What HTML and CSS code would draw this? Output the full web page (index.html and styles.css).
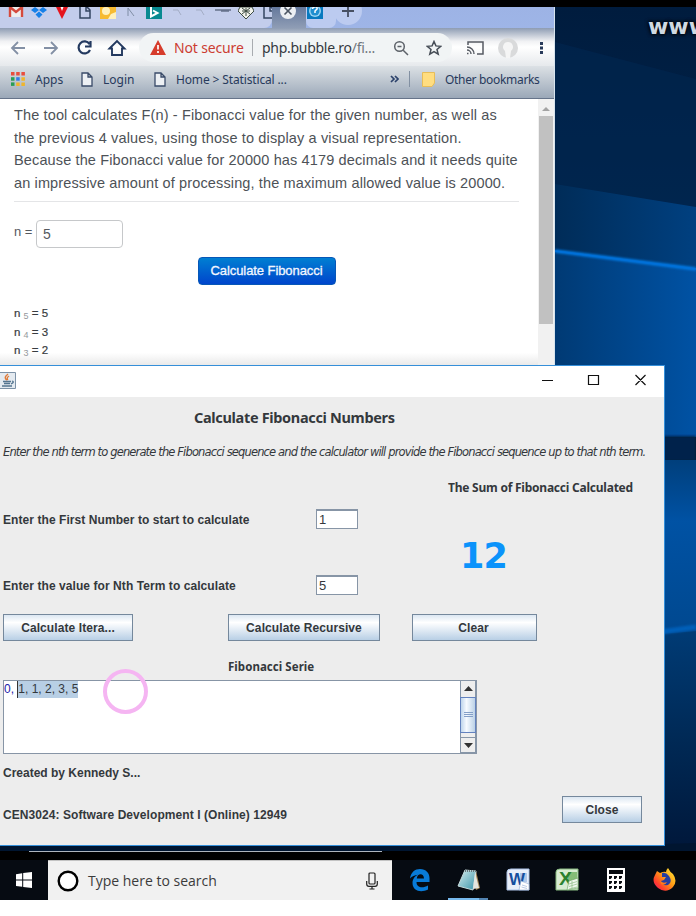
FILE: index.html
```html
<!DOCTYPE html>
<html lang="en">
<head>
<meta charset="utf-8">
<title>Desktop</title>
<link rel="stylesheet" href="styles.css">
</head>
<body>
<main class="screen">
  <svg class="wallpaper" viewBox="0 0 696 851" width="696" height="851">
    <defs>
      <linearGradient id="w1" x1="0" y1="0" x2="0" y2="1"><stop offset="0" stop-color="#001c3e"/><stop offset="1" stop-color="#00254e"/></linearGradient>
      <linearGradient id="w2" x1="0" y1="0" x2="1" y2="0"><stop offset="0" stop-color="#002c58"/><stop offset="1" stop-color="#004080"/></linearGradient>
      <linearGradient id="w3" x1="0" y1="0" x2="1" y2="0"><stop offset="0" stop-color="#003a74"/><stop offset="1" stop-color="#0052a4"/></linearGradient>
      <linearGradient id="w4" x1="0" y1="0" x2="0" y2="1"><stop offset="0" stop-color="#003f7c"/><stop offset=".35" stop-color="#0052a4"/><stop offset="1" stop-color="#00488f"/></linearGradient>
      <linearGradient id="w5" x1="0" y1="0" x2="0" y2="1"><stop offset="0" stop-color="#003b75"/><stop offset=".5" stop-color="#002955"/><stop offset="1" stop-color="#00173a"/></linearGradient>
      <filter id="soft" x="-20%" y="-200%" width="140%" height="500%"><feGaussianBlur stdDeviation="1.2"/></filter>
    </defs>
    <rect width="696" height="851" fill="#001128"/>
    <rect x="555" y="7" width="141" height="240" fill="url(#w1)"/>
    <path d="M555 42 696 79V207L555 184Z" fill="#002650" opacity=".6"/>
    <path d="M555 184 696 207V270L555 251Z" fill="url(#w2)"/>
    <path d="M555 251 696 269V437H555Z" fill="url(#w3)"/>
    <path d="M555 251 696 269" stroke="#0078e2" stroke-width="3.5" filter="url(#soft)"/>
    <path d="M555 251 696 269" stroke="#0070d8" stroke-width="1.5"/>
    <rect x="660" y="436" width="36" height="25" fill="#00234c" filter="url(#soft)"/>
    <rect x="660" y="460" width="36" height="175" fill="url(#w4)"/>
    <path d="M660 634 696 631V851H660Z" fill="url(#w5)"/>
    <path d="M660 632 696 627" stroke="#005fb8" stroke-width="5" filter="url(#soft)"/>
    <path d="M0 846H600L696 843V851H0Z" fill="#001530"/>
  </svg>
  <div class="watermark">www</div>

  <section class="browser">
    <div class="tabs">
      <div class="tabgroup">
        <svg width="16" height="12" viewBox="0 0 16 12"><path d="M1 0H15V10H1Z" fill="#eee"/><path d="M2 10V0L8 5 14 0V10" fill="none" stroke="#d54a3d" stroke-width="2.4"/></svg><i></i>
        <svg width="16" height="12" viewBox="0 0 16 12"><path d="M4 0 8 3 4 6 0 3ZM12 0 16 3 12 6 8 3ZM8 4.500 11.500 7.500 8 11 4.500 7.500Z" fill="#1680e8"/></svg><i></i>
        <svg width="16" height="12" viewBox="0 0 16 12"><path d="M2 0H14L8 12Z" fill="#e5141d"/><path d="M6.500 0 8 4 9.500 0" fill="#fff"/></svg><i></i>
        <svg width="16" height="12" viewBox="0 0 16 12"><path d="M3 0V11H13V3L10 0M9 0V4H13" fill="none" stroke="#344562" stroke-width="1.5"/></svg><i></i>
        <svg width="16" height="12" viewBox="0 0 16 12"><path d="M0 0H16V12H0Z" fill="#f7bb32"/><circle cx="6" cy="4" r="4" fill="#fff1bd"/><path d="M8 12 11 7 16 5V12Z" fill="#fff0bc"/></svg><i></i>
        <svg width="16" height="12" viewBox="0 0 16 12"><path d="M5 9V1L11 9" fill="none" stroke="#7f8da5"/></svg><i></i>
        <svg width="16" height="12" viewBox="0 0 16 12"><path d="M0 0H16V12H0Z" fill="#098a91"/><path d="M5 0V9.500L11.500 6 7 3.500" fill="none" stroke="#fff" stroke-width="2"/></svg><i></i>
        <svg width="16" height="12" viewBox="0 0 16 12"><path d="M4 3H9L12 8" fill="none" stroke="#a3adc5"/></svg><i></i>
        <svg width="16" height="12" viewBox="0 0 16 12"><path d="M4 3H9L12 8" fill="none" stroke="#a3adc5"/></svg><i></i>
        <svg width="16" height="12" viewBox="0 0 16 12"><path d="M0 3H16M6 4H14" fill="none" stroke="#65718b" stroke-width="1.300"/></svg><i></i>
        <svg width="16" height="12" viewBox="0 0 16 12"><path d="M2 0 0 4 8 12 16 4 14 0Z" fill="#f3f4ed" stroke="#3e4c43"/><path d="M4 1 12 7M12 1 4 7M4 4H12M8 1V9" stroke="#3e4c43"/></svg><i></i>
        <svg width="16" height="12" viewBox="0 0 16 12"><path d="M3 0V11H13V3L10 0M9 0V4H13" fill="none" stroke="#344562" stroke-width="1.500"/></svg>
      </div>
      <div class="gap"><svg class="tabclose" width="18" height="18" viewBox="0 0 18 18"><circle cx="9" cy="9" r="8" fill="#eceff3"/><path d="M5.500 5.500 12.500 12.500M12.500 5.500 5.500 12.500" stroke="#4b5563" stroke-width="1.600"/></svg></div>
      <div class="activetab"><svg width="16" height="12" viewBox="0 0 16 12"><path d="M0 0H16V12H0Z" fill="#087abf"/><circle cx="8" cy="4" r="6" fill="#9ad4f2"/><circle cx="8" cy="4" r="4.500" fill="#1f8fd0"/><path d="M5.500 2C6-1 11-1 10 2L8 4V6" fill="none" stroke="#fff" stroke-width="1.500"/></svg></div>
      <svg class="newtab" width="28" height="30" viewBox="0 0 28 30"><circle cx="14" cy="16" r="14" fill="#bccbf0"/><path d="M8 16H20M14 10V22" stroke="#475063" stroke-width="1.800"/></svg>
    </div>
    <div class="toolbar">
      <svg class="nav" width="130" height="20" viewBox="0 0 130 20" fill="none" stroke-width="1.800"><path d="M25 10H12M18 4 12 10 18 16M44 10H57M51 4 57 10 51 16" stroke="#8390a5"/><path d="M89.500 6A6 6 0 1 0 90 12M90.500 3V8.500H85" stroke="#23395f" stroke-width="2.200"/><path d="M109.500 10.500 117 3 124.500 10.500H122V17H112V10.500Z" stroke="#23395f" stroke-width="1.900"/></svg>
      <div class="address">
        <svg width="16" height="15" viewBox="0 0 16 15"><path d="M8 0 16 15H0Z" fill="#d63c2c"/><path d="M8 5V9.500M8 11V13" stroke="#fff" stroke-width="1.700"/></svg>
        <span class="danger">Not secure</span><b></b><span class="url">php.bubble.ro<em>/fi...</em></span>
        <svg class="lens" width="16" height="16" viewBox="0 0 16 16" fill="none" stroke="#5d6269" stroke-width="1.500"><circle cx="6.500" cy="6.500" r="4.800"/><path d="M10.200 10.200 15 15M4.500 6.500H8.500"/></svg>
        <svg width="16" height="16" viewBox="0 0 16 16"><path d="M8 1.500 9.900 5.900 14.700 6.300 11 9.500 12.200 14.200 8 11.700 3.800 14.200 5 9.500 1.300 6.300 6.100 5.900Z" fill="none" stroke="#454c55" stroke-width="1.500"/></svg>
      </div>
      <svg class="extras" width="84" height="20" viewBox="0 0 84 20" fill="none"><path d="M4 7V4H19V16H13" stroke="#575b63" stroke-width="1.500"/><path d="M3 9A7 7 0 0 1 10 16M3 12A4 4 0 0 1 7 16M3 15.500H4.500" stroke="#575b63" stroke-width="1.400"/><circle cx="44" cy="10" r="10" fill="#d9dadb"/><path d="M44 4A5 5 0 0 0 41 13L42 20H46L47 13A5 5 0 0 0 44 4" fill="#f5f5f5"/><path d="M76 4H79V7H76ZM76 8.500H79V11.500H76ZM76 13H79V16H76Z" fill="#283a5a"/></svg>
    </div>
    <div class="bookmarks">
      <svg class="apps" width="14" height="14" viewBox="0 0 14 14"><path d="M0 0H3.500V3.500H0ZM5.200 0H8.700V3.500H5.200ZM10.400 0H13.900V3.500H10.400Z" fill="#e94e3d"/><path d="M0 5.200H3.500V8.700H0Z" fill="#2a9d55"/><path d="M5.200 5.200H8.700V8.700H5.200Z" fill="#347be5"/><path d="M10.400 5.200H13.900V8.700H10.400ZM5.200 10.400H8.700V13.900H5.200ZM10.400 10.400H13.900V13.900H10.400Z" fill="#efb52d"/><path d="M0 10.400H3.500V13.900H0Z" fill="#2a9d55"/></svg><span class="bk1">Apps</span>
      <svg class="doc" width="12" height="15" viewBox="0 0 12 15"><path d="M1 1H7L11 5V14H1ZM7 1V5H11" fill="#edf0f4" stroke="#3a4b69" stroke-width="1.300"/></svg><span class="bk2">Login</span>
      <svg class="doc" width="12" height="15" viewBox="0 0 12 15"><path d="M1 1H7L11 5V14H1ZM7 1V5H11" fill="#edf0f4" stroke="#3a4b69" stroke-width="1.300"/></svg><span class="bk3">Home &gt; Statistical ...</span>
      <svg class="more" width="9" height="8" viewBox="0 0 9 8"><path d="M1 1 4 4 1 7M5 1 8 4 5 7" fill="none" stroke="#2c426b" stroke-width="1.700"/></svg><b></b>
      <svg class="folder" width="13" height="15" viewBox="0 0 13 15"><path d="M.5.500H12.500V11L10 14.500H.5Z" fill="#ffdd80" stroke="#e7bd59"/></svg><span class="bk4">Other bookmarks</span>
    </div>
    <div class="viewport">
      <div class="page">
        <p class="intro"><span>The tool calculates F(n) - Fibonacci value for the given number, as well as</span><br><span>the previous 4 values, using those to display a visual representation.</span><br><span>Because the Fibonacci value for 20000 has 4179 decimals and it needs quite</span><br><span>an impressive amount of processing, the maximum allowed value is 20000.</span></p>
        <div class="query"><span>n =</span><div class="qbox">5</div></div>
        <div class="bluebtn"><span>Calculate Fibonacci</span></div>
        <div class="results"><div>n <sub>5</sub> = 5</div><div>n <sub>4</sub> = 3</div><div>n <sub>3</sub> = 2</div><i></i></div>
      </div>
      <div class="scroll"><svg width="15" height="17" viewBox="0 0 15 17"><path d="M4 12 8 8 12 12Z" fill="#a3a3a3"/></svg><div></div></div>
    </div>
  </section>

  <section class="java">
    <header class="titlebar">
      <svg class="cup" width="16" height="17" viewBox="0 0 16 17"><path d="M-1 .5H15.500V16.500H-1Z" fill="#e4eaf0" stroke="#7d92a7"/><path d="M7 8Q3 6 8 2M8 8Q6 6 9 4" fill="none" stroke="#e07b39" stroke-width="1.400"/><path d="M3 9.500H11M4 11.500H10M12 9Q15 10 11 12M2 14H12" fill="none" stroke="#54758f" stroke-width="1.300"/></svg>
      <svg class="controls" width="110" height="14" viewBox="0 0 110 14" fill="none" stroke="#111" stroke-width="1.200"><path d="M1 7.500H12M47.500 2.500H57.500V11.500H47.500ZM94.500 2 104.500 12M104.500 2 94.500 12"/></svg>
    </header>
    <h1><span>Calculate Fibonacci Numbers</span></h1>
    <p class="help"><span>Enter the nth term to generate the Fibonacci sequence and the calculator will provide the Fibonacci sequence up to that nth term.</span></p>
    <div class="columns">
      <div class="inputs">
        <div class="field"><label class="l1">Enter the First Number to start to calculate</label><div class="num">1</div></div>
        <div class="field"><label class="l2">Enter the value for Nth Term to calculate</label><div class="num">5</div></div>
      </div>
      <div class="sum"><h2><span>The Sum of Fibonacci Calculated</span></h2><strong>12</strong></div>
    </div>
    <div class="buttons"><div class="btn b1"><span>Calculate Itera...</span></div><div class="btn b2"><span>Calculate Recursive</span></div><div class="btn b3"><span>Clear</span></div></div>
    <h3><span>Fibonacci Serie</span></h3>
    <div class="output">
      <div class="text"><span>0, </span><mark>1, 1, 2, 3, 5</mark></div>
      <svg width="16" height="72" viewBox="0 0 16 72"><defs><linearGradient id="th"><stop offset="0" stop-color="#bad2ea"/><stop offset=".4" stop-color="#f6faff"/><stop offset="1" stop-color="#b8cfe5"/></linearGradient></defs><path d="M0 0H16V72H0Z" fill="#eee"/><path d="M.5 0V72M0 16.500H16M0 56.500H16M0 71.500H16M15.500 0V72" stroke="#8796a8"/><path d="M4 10H13L8.500 5ZM4 62H13L8.500 67Z" fill="#333"/><rect x=".5" y="16.500" width="15" height="35" fill="url(#th)" stroke="#6382bf"/><path d="M4 31.500H13M4 33.500H13M4 35.500H13" stroke="#849fc8"/></svg>
    </div>
    <div class="credit"><span>Created by Kennedy S...</span></div>
    <footer><span class="course">CEN3024: Software Development I (Online) 12949</span><div class="btn close"><span>Close</span></div></footer>
  </section>
  <div class="ring"></div>
  <div class="progress"></div>

  <nav class="taskbar">
    <div class="start"><svg width="16" height="16" viewBox="0 0 16 16"><path d="M0 2.200 6.200 1.300V7.400H0ZM7.200 1.100 16 0V7.400H7.200ZM0 8.400H6.200V14.700L0 13.900ZM7.200 8.400H16V16L7.200 14.900Z" fill="#fff"/></svg></div>
    <div class="search"><svg width="22" height="22" viewBox="0 0 22 22"><circle cx="11" cy="11" r="9.300" fill="#fff" stroke="#000" stroke-width="2.400"/></svg><span>Type here to search</span><svg class="mic" width="12" height="18" viewBox="0 0 12 18" fill="none" stroke="#222" stroke-width="1.200"><rect x="3" y="1" width="6" height="11" rx="1"/><path d="M.7 9V12Q.7 14.300 3 14.300H9Q11.300 14.300 11.300 12V9M6 14.500V17M3.500 17H8.500"/></svg></div>
    <div class="icons">
      <div><svg width="22" height="24" viewBox="0 0 22 24"><path d="M1 10.500C2 4 6 1 11 1 17 1 20.500 5 20.500 10V14H7.500C7.500 20 14 20.500 19 17.500V21.500C12 25 3.500 23 3.500 15 3.500 11 6 8 9 6.800 5.500 7.300 3 8.500 1 10.500ZM7.800 10.500H15C15 4.500 8 5 7.800 10.500Z" fill="#087bd8" fill-rule="evenodd"/></svg></div>
      <div class="running"><svg width="24" height="24" viewBox="0 0 24 24"><defs><linearGradient id="note" x2="1" y2="1"><stop stop-color="#d6edee"/><stop offset="1" stop-color="#3a95aa"/></linearGradient></defs><path d="M19 3 23 20 19 22 15 4Z" fill="#a98b58"/><path d="M8 2 19 3 16 22 1 18Z" fill="url(#note)" stroke="#c4d9da"/><path d="M18 4 22 20 16 21Z" fill="#e5e6df"/><path d="M8 3H20" stroke="#68777b" stroke-width="2" stroke-dasharray="1 1"/></svg></div>
      <div><svg width="24" height="24" viewBox="0 0 24 24"><path d="M5 1H23V22H1V4Q1 1 5 1Z" fill="#e8effa" stroke="#abc2e6"/><path d="M14 5H21V14H14" fill="#afc8ea"/><text x="3" y="17" font-size="17" font-weight="700" font-family="Liberation Sans,sans-serif" fill="#164f9e" textLength="16" lengthAdjust="spacingAndGlyphs">W</text><path d="M15 13 23 16V22H13Z" fill="#fff" stroke="#91abd2" stroke-width=".6"/><path d="M16 17 21 18.500M15.500 19 21 20.500" stroke="#9db4d8" stroke-width=".7"/></svg></div>
      <div><svg width="24" height="24" viewBox="0 0 24 24"><path d="M5 1H23V22H1V4Q1 1 5 1Z" fill="#d8ecd3" stroke="#86b97f"/><path d="M13 4H22V14H13" fill="#85bd77"/><text x="4" y="17" font-size="18" font-weight="700" font-family="Liberation Sans,sans-serif" fill="#2b8130" textLength="13" lengthAdjust="spacingAndGlyphs">X</text><path d="M14 13 23 10V20L12 22Z" fill="#eef6ec" stroke="#68a35f" stroke-width=".6"/><path d="M14 16 22 13.500M14 18.500 22 16M14 21 22 19M17 13V21" stroke="#8dbb84" stroke-width=".7"/></svg></div>
      <div><svg width="18" height="24" viewBox="0 0 18 24"><path d="M0 0H18V24H0Z" fill="#fff"/><path d="M2 2H16V6H2ZM2 8H5V9.500L3.500 11H2ZM7 8H10V9.500L8.500 11H7ZM12 8H15V9.500L13.500 11H12ZM2 13H5V14.500L3.500 16H2ZM7 13H10V14.500L8.500 16H7ZM12 13H15V14.500L13.500 16H12ZM2 18H5V19.500L3.500 21H2ZM7 18H10V19.500L8.500 21H7ZM12 18H15V19.500L13.500 21H12Z" fill="#080b10"/></svg></div>
      <div><svg width="24" height="24" viewBox="0 0 24 24"><defs><linearGradient id="fox" x1="1" y1="0" x2="0" y2="1"><stop stop-color="#fff13b"/><stop offset=".45" stop-color="#ff9a15"/><stop offset=".75" stop-color="#ff3d2e"/><stop offset="1" stop-color="#e61578"/></linearGradient></defs><path d="M4 3 7 5Q11 3 13 4Q13 2 15 0Q17 4 20 6Q25 13 20 19Q13 26 5 20Q-2 14 2 7Z" fill="url(#fox)"/><path d="M9 5Q13 4 16 8Q20 14 15 17Q9 18 8 13L11 12 13 9 9 9Z" fill="#263ea0"/><path d="M7 12Q9 16 14 14Q12 18 8 16Z" fill="#ff7b1d"/></svg></div>
    </div>
  </nav>
</main>
</body>
</html>
```
FILE: styles.css
```css
*{box-sizing:border-box}
body{margin:0;background:#fff;font-family:"Liberation Sans",sans-serif}
svg{display:block;flex:none}
h1,h2,h3,p{margin:0}
span{white-space:nowrap}
.screen{position:relative;width:696px;height:900px;background:#000;overflow:hidden}
.wallpaper{position:absolute;left:0;top:0}
.screen::before{content:"";position:absolute;left:0;top:0;width:696px;height:7px;background:#000;z-index:9}
.watermark{position:absolute;left:648px;top:12px;color:#cfd9e2;font:bold 22px/30px "DejaVu Sans",sans-serif;text-shadow:0 0 4px #000,0 0 4px #000}

.browser{position:absolute;left:0;top:7px;width:555px;height:359px;background:#fff;display:flex;flex-direction:column;border-right:1px solid #d7e4ee;overflow:hidden}
.tabs{height:21px;background:linear-gradient(#9db3e5,#9eb5e7);display:flex}
.tabgroup{width:272px;padding-left:8px;background:#c3cdeb;display:flex;border-radius:0 0 8px}
.tabgroup svg{margin-right:3px}
.tabgroup i{width:1px;height:14px;background:#8894b1;margin-right:4px}
.gap{width:34px;padding-left:7px;background:linear-gradient(#64789c,#8f9db5)}
.tabclose{margin-top:-5px}
.activetab{background:#bccbf0;width:30px;padding-left:1px;border-radius:0 0 7px 7px}
.newtab{margin-top:-12px;margin-left:-2px}
.toolbar{height:38px;background:linear-gradient(#8e9cb3,#f1f2f4 35%,#fff 50%,#e6e9ec);display:flex;align-items:center;padding-top:1px}
.address{width:313px;height:29px;border-radius:15px;background:#f1f4f5;margin-left:9px;display:flex;align-items:center;padding-left:11px}
.danger{font:14px "Noto Sans",sans-serif;color:#cc3d32;margin-left:8px;width:70px;letter-spacing:-.15px}
.address b{width:1px;height:17px;background:#a8acb0;margin:0 9px 0 8px}
.url{font:14px "Noto Sans",sans-serif;color:#34383e;width:114px;letter-spacing:-.28px}
.url em{font-style:normal;color:#6f767d}
.lens{margin:0 17px 0 17px}
.extras{margin-left:12px}
.bookmarks{height:33px;background:linear-gradient(#dce1e5,#9ba8b8);border-bottom:1px solid #66748a;display:flex;align-items:center;font:12px "Noto Sans",sans-serif;color:#283a5c;padding:0 0 6px 11px}
.bk1{width:46px;margin-left:10px}.bk2{width:51px;margin-left:10px}.bk3{width:214px;margin-left:10px;letter-spacing:-.14px}
.bookmarks b{width:1px;height:16px;background:#8290a2;margin:0 12px 0 10px}
.bk4{margin-left:10px;letter-spacing:-.32px}
.viewport{height:267px;display:flex;background:#fff}
.page{width:538px;padding:5px 19px 0 14px;display:flex;flex-direction:column;background:linear-gradient(#fff 95%,#e8e8e8)}
.intro{font:14.500px/22.700px "Liberation Sans",sans-serif;color:#4d5257;height:98px;border-bottom:1px solid #e4e5e7;letter-spacing:.13px}
.query{display:flex;margin-top:17px;align-items:center;color:#55595e;font-size:14px;height:29px}
.query span{width:22px;font-size:13px;margin-top:-4px}
.qbox{width:87px;height:28px;border:1px solid #c6c8ca;border-radius:4px;padding:4px 6px;line-height:18px;font-size:14px}
.bluebtn{align-self:center;width:138px;height:28px;margin-top:9px;background:linear-gradient(#007fd2,#0045cc);border:1px solid #0757b7;border-radius:4px;color:#f3f7ff;font:13px/25px "Liberation Sans",sans-serif;text-align:center;-webkit-text-stroke:.3px}
.bluebtn span{letter-spacing:-.08px}
.results{margin-top:19px;color:#383c41;font-size:11.500px;line-height:18.500px;-webkit-text-stroke:.2px}
.results div{height:18.500px}
.results i{display:block;width:3px;height:1px;background:#555;margin:5px 0 0 29px}
sub{font-size:9px;line-height:0;color:#95999d;vertical-align:-2px;-webkit-text-stroke:0}
.scroll{width:16px;background:#f1f1f1}
.scroll div{width:14px;margin-left:1px;height:208px;background:#c1c1c1}

.java{position:absolute;left:0;top:365px;width:665px;height:481px;background:#ededed;border:1px solid #358fd9;border-left:0;color:#34383c;display:flex;flex-direction:column;font-size:12px;font-weight:bold}
.titlebar{height:31px;background:#fff;display:flex;justify-content:space-between;align-items:center}
.controls{margin-right:13px;margin-top:-3px}
.cup{margin-top:-2px}
.java h1{height:42px;padding-left:194px;font:bold 14.500px/40px "Noto Sans",sans-serif;letter-spacing:-.33px}
.help{height:27px;padding-left:3px;font:italic 11.500px/27px "DejaVu Sans",sans-serif;letter-spacing:-.86px}
.columns{display:flex;height:147px}
.inputs{width:448px;padding:42px 0 0 3px}
.field{display:flex;align-items:center;height:22px;margin-bottom:44px}
.field label{width:313px;white-space:nowrap;letter-spacing:.07px;padding-top:1px}
.num{width:42px;height:20px;border:1px solid #8795a6;border-top-width:2px;background:#fff;font-weight:normal;font-size:13px;line-height:18px;padding-left:2px}
.sum h2{font:bold 12px/18px "Noto Sans",sans-serif;padding-top:13px;letter-spacing:-.23px}
.sum strong{display:block;font:bold 35px/44px "DejaVu Sans",sans-serif;color:#0b93fb;padding:37px 0 0 12px;letter-spacing:-.8px}
.buttons{height:27px;display:flex;padding-left:3px;margin-top:1px}
.btn{height:27px;border:1px solid #75889c;background:linear-gradient(#dce7f2,#fff 30%,#e6eef6 55%,#b8cfe5);display:flex;align-items:center;justify-content:center;letter-spacing:.09px;padding-top:1px}
.b1{width:130px;margin-right:95px}.b2{width:152px;margin-right:32px}.b3{width:125px;padding-right:2px}
.java h3{height:39px;padding-left:228px;font:bold 11.500px/51px "Noto Sans",sans-serif;letter-spacing:.05px}
.output{display:flex;width:474px;height:74px;margin-left:3px;border:1px solid #8795a6;background:#fff}
.text{width:456px;color:#2222aa;font-weight:normal;font-size:12px;line-height:17px}
.text span{white-space:pre}
mark{display:inline-block;background:#b8cfe5;color:#34383c;border-left:1px solid #333}
.credit{height:38px;padding-left:3px;line-height:38px}
footer{display:flex;padding:4px 22px 0 3px;justify-content:space-between}
.course{line-height:38px;letter-spacing:.07px}
.close{width:80px}
.ring{position:absolute;left:103px;top:669px;width:45px;height:45px;border:4px solid #f5b5f2;border-radius:50%;filter:blur(.7px)}
.progress{position:absolute;left:29px;top:851px;width:353px;height:1px;background:#aeb4bc}

.taskbar{position:absolute;left:0;top:860px;width:696px;height:40px;background:#060b12;display:flex}
.start{width:48px;display:flex;align-items:center;justify-content:center}
.search{width:344px;background:#f1f1f1;border-top:1px solid #c3c3c3;display:flex;align-items:center;padding:0 14px 0 9px;color:#3b3b3b;font:14px "Open Sans",sans-serif}
.search span{margin-left:9px;flex:1}
.icons{display:flex;padding-left:3px}
.icons div{width:49px;height:40px;display:flex;align-items:center;justify-content:center}
.icons .running{background:linear-gradient(90deg,#76b9ed 31px,#5385b2 31px) 4px 38px/40px 2px no-repeat}
.icons div:nth-child(5){padding-left:1px}
.icons div:last-child{padding-left:1px}
```
